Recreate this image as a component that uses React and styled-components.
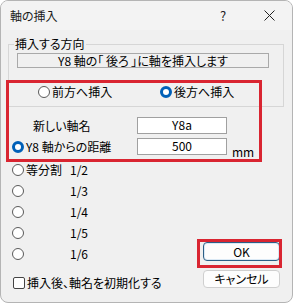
import React from 'react';
import styled, { createGlobalStyle } from 'styled-components';

const Global = createGlobalStyle`
  html, body { margin: 0; padding: 0; background: #ffffff; }
  body {
    font-family: "Noto Sans CJK JP", "Noto Sans", sans-serif;
    font-size: 12px;
    font-feature-settings: "palt";
    color: #000;
  }
  * { box-sizing: border-box; }
`;

const Window = styled.div`
  position: relative;
  width: 293px;
  height: 303px;
  border: 1px solid #b4b4b4;
  border-radius: 8px;
  overflow: hidden;
  background: #f0f0f0;
  display: flex;
  flex-direction: column;
`;

const TitleBar = styled.div`
  height: 29px;
  display: flex;
  align-items: center;
  padding-left: 9px;
  background: #f3f3f3;
  line-height: 14px;
`;

const TitleText = styled.span`
  flex: 1;
  color: #1a1a1a;
`;

const TitleButton = styled.div`
  width: 46px;
  height: 29px;
  display: flex;
  align-items: center;
  justify-content: center;
  color: #222;
  font-size: 13px;
`;

const Body = styled.div`
  flex: 1;
  padding: 0 8px 0 7px;
  display: flex;
  flex-direction: column;
`;

const Group = styled.fieldset`
  margin: 7px 0 0 0;
  width: 276px;
  border: 1px solid #d6d6d6;
  padding: 2px 8px 6px 8px;
  min-inline-size: 0;
`;

const Legend = styled.legend`
  margin-left: -3px;
  padding: 0 1px;
  line-height: 14px;
`;

const InfoField = styled.div`
  width: 252px;
  height: 15px;
  border: 1px solid #a9a9a9;
  text-align: center;
  line-height: 13px;
  background: #f0f0f0;
`;

const DirectionRow = styled.div`
  margin-top: 16px;
  padding-left: 21px;
  display: grid;
  grid-template-columns: 122px auto;
  height: 16px;
  align-items: center;
`;

const Choice = styled.label`
  display: flex;
  align-items: center;
  gap: 2px;
  line-height: 14px;
`;

const Radio = styled.span`
  width: 12px;
  height: 12px;
  border-radius: 50%;
  flex: none;
  border: ${p => (p.$on ? '3.5px solid #0060b8' : '1px solid #5a5a5a')};
  background: #fff;
`;

const CheckBox = styled.span`
  width: 12px;
  height: 12px;
  flex: none;
  border: 1px solid #444;
  border-radius: 2px;
  background: #fff;
`;

const FormRows = styled.div`
  margin-top: 10px;
  display: flex;
  flex-direction: column;
  gap: 4px;
`;

const FormRow = styled.div`
  display: flex;
  align-items: center;
  height: 17px;
`;

const FormLabel = styled.div`
  width: 129px;
  padding-left: ${p => p.$indent}px;
  display: flex;
  align-items: center;
  line-height: 14px;
`;

const Input = styled.div`
  width: 90px;
  height: 17px;
  border: 1px solid #a0a0a0;
  background: #fff;
  text-align: center;
  line-height: 14px;
`;

const Unit = styled.span`
  margin-left: 5px;
  align-self: flex-end;
  margin-bottom: -4px;
  line-height: 14px;
`;

const Lower = styled.div`
  display: flex;
  justify-content: space-between;
  align-items: flex-end;
  margin-top: 4px;
`;

const LeftColumn = styled.div`
  padding-left: 4px;
  display: flex;
  flex-direction: column;
`;

const ListItem = styled.div`
  height: 21px;
  display: flex;
  align-items: center;
`;

const Prefix = styled.span`
  display: inline-block;
  width: 42px;
`;

const CheckRow = styled.div`
  margin-top: 8px;
  height: 21px;
  display: flex;
  align-items: center;
  padding-left: 1px;
`;

const ButtonColumn = styled.div`
  display: flex;
  flex-direction: column;
  gap: 9px;
  margin-right: 4px;
  margin-bottom: 5px;
`;

const Button = styled.div`
  width: 77px;
  height: ${p => (p.$default ? 19 : 18)}px;
  border: 1px solid ${p => (p.$default ? '#2c5f86' : '#cfcfcf')};
  border-radius: 4px;
  background: #fdfdfd;
  display: flex;
  align-items: center;
  justify-content: center;
  line-height: 14px;
  ${p => p.$default && 'box-shadow: inset 0 0 0 1px #dbe9f5;'}
`;

const Highlight = styled.div`
  position: absolute;
  border: 3px solid #d92531;
  pointer-events: none;
`;

const CloseIcon = () => (
  <svg width="11" height="11" viewBox="0 0 11 11">
    <path d="M0.5 0.5 L10.5 10.5 M10.5 0.5 L0.5 10.5" stroke="#222" strokeWidth="1" fill="none" />
  </svg>
);

const fractions = ['1/2', '1/3', '1/4', '1/5', '1/6'];

export default function App() {
  return (
    <>
      <Global />
      <Window>
        <TitleBar>
          <TitleText>軸の挿入</TitleText>
          <TitleButton>?</TitleButton>
          <TitleButton><CloseIcon /></TitleButton>
        </TitleBar>
        <Body>
          <Group>
            <Legend>挿入する方向</Legend>
            <InfoField>Y8 軸の「 後ろ 」に軸を挿入します</InfoField>
            <DirectionRow>
              <Choice><Radio />前方へ挿入</Choice>
              <Choice><Radio $on />後方へ挿入</Choice>
            </DirectionRow>
          </Group>
          <FormRows>
            <FormRow>
              <FormLabel $indent={25}>新しい軸名</FormLabel>
              <Input>Y8a</Input>
            </FormRow>
            <FormRow>
              <FormLabel $indent={4}>
                <Choice><Radio $on />Y8 軸からの距離</Choice>
              </FormLabel>
              <Input>500</Input>
              <Unit>mm</Unit>
            </FormRow>
          </FormRows>
          <Lower>
            <LeftColumn>
              {fractions.map((f, i) => (
                <ListItem key={f}>
                  <Choice><Radio /><Prefix>{i === 0 ? '等分割' : ''}</Prefix>{f}</Choice>
                </ListItem>
              ))}
              <CheckRow>
                <Choice><CheckBox />挿入後、軸名を初期化する</Choice>
              </CheckRow>
            </LeftColumn>
            <ButtonColumn>
              <Button $default>OK</Button>
              <Button>キャンセル</Button>
            </ButtonColumn>
          </Lower>
        </Body>
        <Highlight style={{ left: 5, top: 79, width: 256, height: 82 }} />
        <Highlight style={{ left: 196, top: 238, width: 85, height: 29 }} />
      </Window>
    </>
  );
}
